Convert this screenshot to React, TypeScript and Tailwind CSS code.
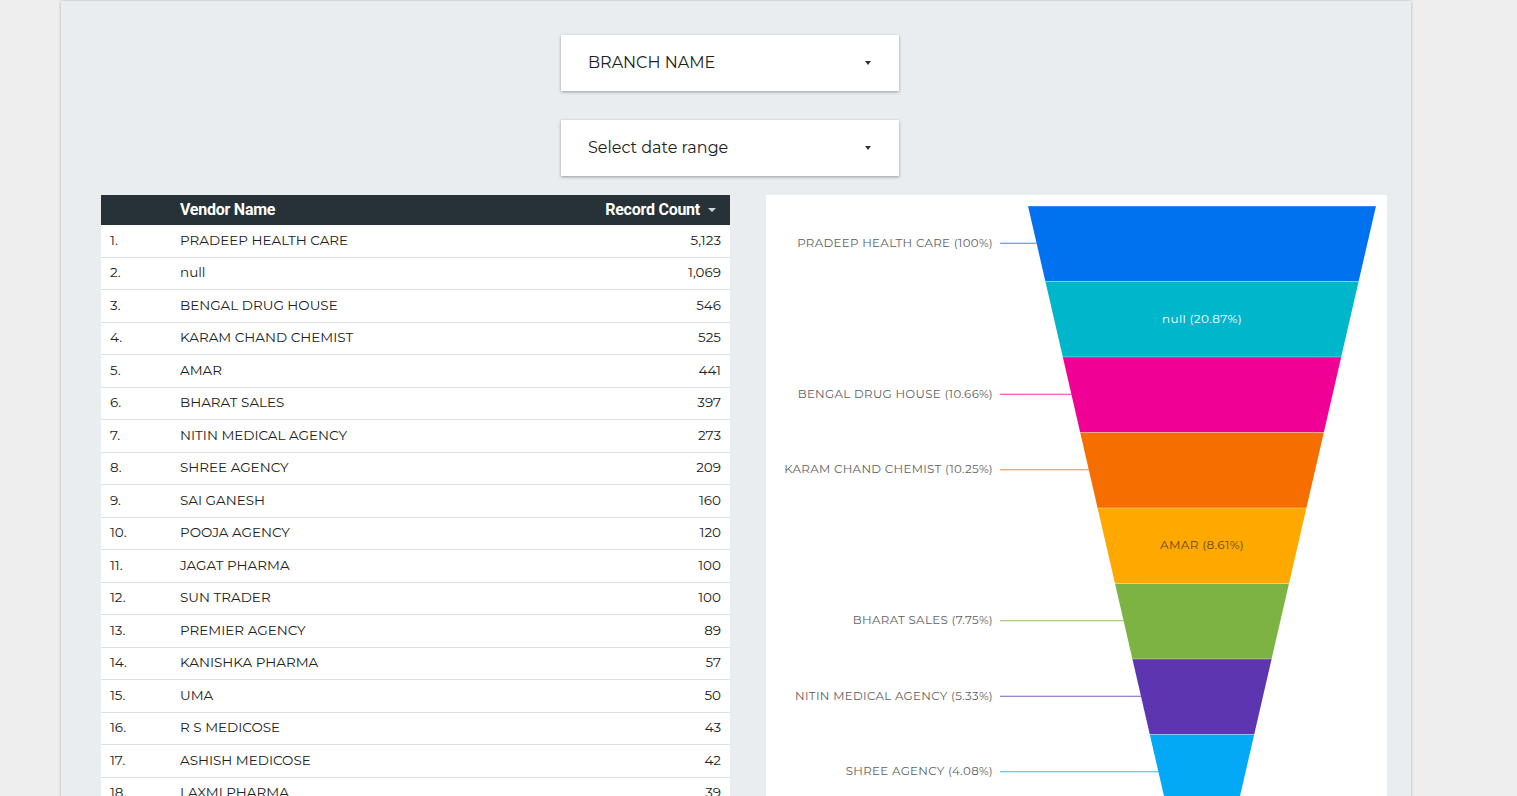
import React from 'react';

const rows: [string, string][] = [
  ['PRADEEP HEALTH CARE', '5,123'],
  ['null', '1,069'],
  ['BENGAL DRUG HOUSE', '546'],
  ['KARAM CHAND CHEMIST', '525'],
  ['AMAR', '441'],
  ['BHARAT SALES', '397'],
  ['NITIN MEDICAL AGENCY', '273'],
  ['SHREE AGENCY', '209'],
  ['SAI GANESH', '160'],
  ['POOJA AGENCY', '120'],
  ['JAGAT PHARMA', '100'],
  ['SUN TRADER', '100'],
  ['PREMIER AGENCY', '89'],
  ['KANISHKA PHARMA', '57'],
  ['UMA', '50'],
  ['R S MEDICOSE', '43'],
  ['ASHISH MEDICOSE', '42'],
  ['LAXMI PHARMA', '39'],
];

// funnel segments: colour, label, label inside?
const segs: { color: string; label: string; inside?: boolean; dark?: boolean }[] = [
  { color: '#0072f0', label: 'PRADEEP HEALTH CARE (100%)' },
  { color: '#00b6cb', label: 'null (20.87%)', inside: true },
  { color: '#f10096', label: 'BENGAL DRUG HOUSE (10.66%)' },
  { color: '#f66d00', label: 'KARAM CHAND CHEMIST (10.25%)' },
  { color: '#ffa800', label: 'AMAR (8.61%)', inside: true, dark: true },
  { color: '#7cb342', label: 'BHARAT SALES (7.75%)' },
  { color: '#5e35b1', label: 'NITIN MEDICAL AGENCY (5.33%)' },
  { color: '#03a9f4', label: 'SHREE AGENCY (4.08%)' },
  { color: '#ff7043', label: 'SAI GANESH (3.12%)' },
];

const body = "font-['Montserrat','Liberation_Sans',Arial,sans-serif]";
const chartFont = "Montserrat, 'Liberation Sans', Arial, sans-serif";

function Dropdown({ label }: { label: string }) {
  return (
    <div className="flex h-[56px] w-[338px] items-center justify-between bg-white pl-[27px] pr-[28px] shadow-[0_1px_3px_rgba(0,0,0,0.35)]">
      <span className={`${body} text-[16px] text-[#212121]`}>{label}</span>
      <svg width="6" height="4" viewBox="0 0 6 4">
        <path d="M0 0h6L3 4z" fill="#333" />
      </svg>
    </div>
  );
}

function Funnel() {
  const top = 11;
  const h = 75.5;
  const x0 = 262;
  const x1 = 610;
  const slope = 17.4;
  const cx = (x0 + x1) / 2;
  return (
    <svg width="621" height="640" className="block">
      {segs.map((s, i) => {
        const y = top + h * i;
        const l1 = x0 + slope * i;
        const r1 = x1 - slope * i;
        const l2 = x0 + slope * (i + 1);
        const r2 = x1 - slope * (i + 1);
        const mid = y + h / 2;
        const lm = (l1 + l2) / 2;
        return (
          <g key={i}>
            <polygon points={`${l1},${y} ${r1},${y} ${r2},${y + h} ${l2},${y + h}`} fill={s.color} />
            <line x1={l1} y1={y} x2={r1} y2={y} stroke="rgba(255,255,255,0.35)" strokeWidth="1" />
            {s.inside ? (
              <text
                x={cx}
                y={mid + 3.5}
                textAnchor="middle"
                fontSize="12"
                letterSpacing="0.35"
                fontFamily={chartFont}
                fill={s.dark ? '#5f4b22' : '#ffffff'}
              >
                {s.label}
              </text>
            ) : (
              <g>
                <line x1={234} y1={mid - 0.5} x2={lm} y2={mid - 0.5} stroke={s.color} strokeWidth="1" opacity="0.8" />
                <text
                  x={227}
                  y={mid + 3}
                  textAnchor="end"
                  fontSize="11.8"
                  letterSpacing="0.33"
                  fontFamily={chartFont}
                  fill="#5f5f5f"
                >
                  {s.label}
                </text>
              </g>
            )}
          </g>
        );
      })}
    </svg>
  );
}

export default function App() {
  return (
    <div className="min-h-screen overflow-hidden bg-[#eeeeee] pt-px">
      <div className="ml-[61px] w-[1350px] bg-[#e9edf0] pb-10 shadow-[0_0_3px_rgba(0,0,0,0.25)]">
        <div className="flex flex-col items-center gap-[29px] pr-[12px] pt-[34px]">
          <Dropdown label="BRANCH NAME" />
          <Dropdown label="Select date range" />
        </div>
        <div className="mt-[19px] flex items-start pl-[40px]">
          <div className="w-[629px] bg-white">
            <div className="flex h-[30px] items-center bg-[#263238] pr-[14px] font-['Roboto',sans-serif] text-[16px] font-bold tracking-[-0.25px] text-white">
              <span className="w-[79px]" />
              <span className="flex-1">Vendor Name</span>
              <span>Record Count</span>
              <svg width="8" height="4" viewBox="0 0 8 4" className="ml-[8px]">
                <path d="M0 0h8L4 4z" fill="#cfd8dc" />
              </svg>
            </div>
            {rows.map(([name, count], i) => (
              <div
                key={i}
                className={`${body} flex h-[32.5px] items-center border-b border-[#e0e0e0] pb-[2px] pr-[9px] text-[13.5px] text-[#212121]`}
              >
                <span className="w-[79px] pl-[9px]">{i + 1}.</span>
                <span className="flex-1">{name}</span>
                <span>{count}</span>
              </div>
            ))}
          </div>
          <div className="ml-[36px] h-[640px] w-[621px] bg-white">
            <Funnel />
          </div>
        </div>
      </div>
    </div>
  );
}
